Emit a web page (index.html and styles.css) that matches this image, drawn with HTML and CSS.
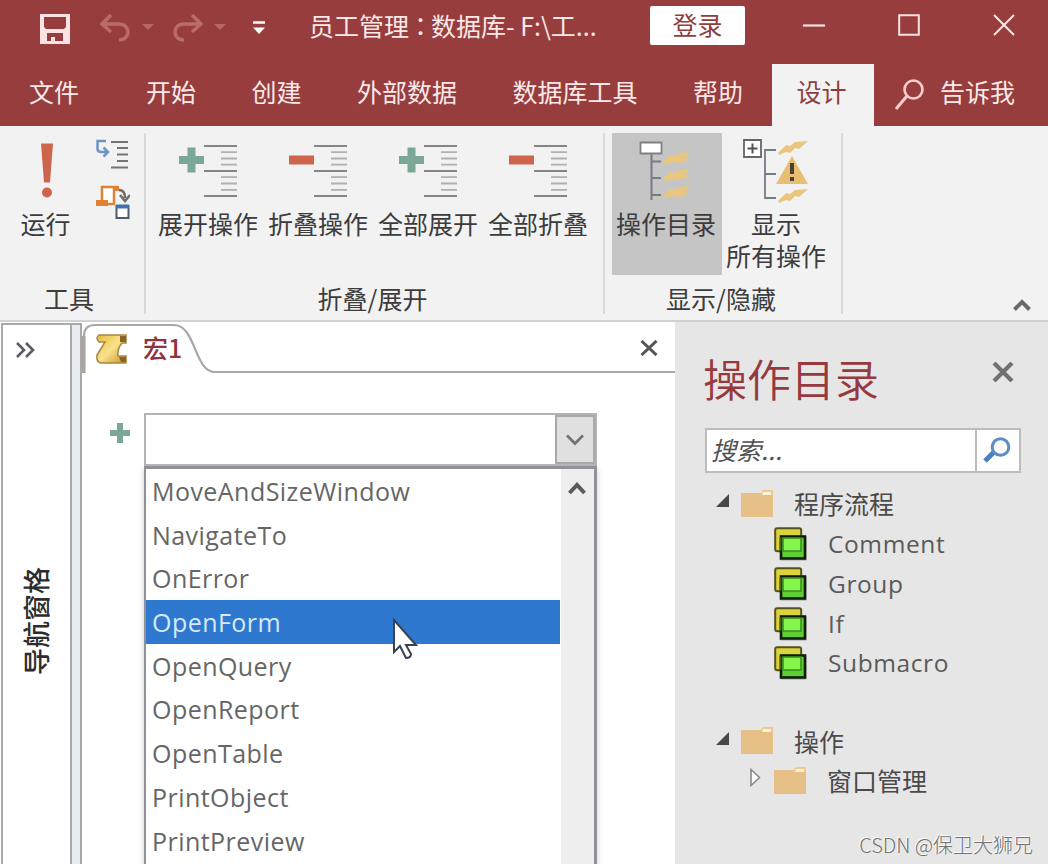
FILE: index.html
```html
<!DOCTYPE html>
<html lang="zh-CN">
<head>
<meta charset="utf-8">
<title>员工管理</title>
<link rel="stylesheet" href="styles.css">
</head>
<body>
<svg class="defs" width="0" height="0">
  <defs>
    <g id="outline-lines">
      <path d="M25 2.500h33M25 27.500h33M25 52.500h33" stroke="#858585" stroke-width="2"/>
      <path d="M42 8.700h16M42 15h16M42 21.200h16M42 33.700h16M42 40h16M42 46.300h16" stroke="#b0b0b0" stroke-width="1.800"/>
    </g>
    <path id="bolt" d="M0 12L8 4l4 1 5-4 13-1-9 8-4-1-5 5-4-1-7 3z"/>
    <path id="bolt-solid" d="M0 12L8 4l5 1 4-3 11-1-5 6 5 1-11 4-5-1-8 2z"/>
    <g id="folder">
      <path d="M18 6l4-5h10v8H18z" fill="#f0c987"/>
      <path d="M22 3h8v3h-9z" fill="#fff3df"/>
      <path d="M0 4h19l3 2h10v22H0z" fill="#e6c086"/>
    </g>
    <g id="block">
      <rect x="6" y="9" width="27" height="25" rx="2" fill="#999" opacity=".45"/>
      <rect x="1.200" y="1.200" width="26" height="23" rx="2" fill="#dcd43c" stroke="#55511c" stroke-width="2"/>
      <rect x="7" y="9.500" width="24" height="22" fill="#5fce35" stroke="#101e08" stroke-width="2.600"/>
      <rect x="9" y="11" width="18" height="13" fill="#84f64b" stroke="#398a20" stroke-width="1.500"/>
      <path d="M6.500 10.500v13" stroke="#545b12" stroke-width="2"/>
    </g>
  </defs>
</svg>
<div class="app">
  <header class="titlebar">
    <svg class="save" width="30" height="31" viewBox="0 0 30 31"><path d="M0 0h30v30H0zM4 3v10l2 2h18l2-2V3zM7 19v8h4v-4h4v4h8v-8z" fill="#fbe3e3" fill-rule="evenodd"/></svg>
    <svg class="undo" width="31" height="28" viewBox="0 0 31 28"><path d="M11 1L2 10l9 8M2 10h17c12 0 12 16 0 16" fill="none" stroke="#b96c6c" stroke-width="3.500"/></svg>
    <svg class="caret" width="12" height="6" viewBox="0 0 12 6"><path d="M0 0h12L6 6z" fill="#b66767"/></svg>
    <svg class="redo" width="31" height="28" viewBox="0 0 31 28"><path d="M20 1l9 9-9 8M29 10H12c-12 0-12 16 0 16" fill="none" stroke="#b96c6c" stroke-width="3.500"/></svg>
    <svg class="caret" width="12" height="6" viewBox="0 0 12 6"><path d="M0 0h12L6 6z" fill="#b66767"/></svg>
    <svg class="customize" width="12" height="14" viewBox="0 0 12 14"><path d="M0 1.500h12" stroke="#fff" stroke-width="2.500"/><path d="M0 6.500h12L6 13z" fill="#fff"/></svg>
    <span class="caption">员工管理<span class="colon">：</span>数据库- F:\工...</span>
    <span class="login">登录</span>
    <svg class="minimize" width="22" height="22" viewBox="0 0 22 22"><path d="M0 10.500h22" stroke="#fbe3e3" stroke-width="2.200"/></svg>
    <svg class="maximize" width="22" height="22" viewBox="0 0 22 22"><path d="M1.200 1.200h19.600v19.600H1.200z" fill="none" stroke="#fbe3e3" stroke-width="2"/></svg>
    <svg class="close" width="22" height="22" viewBox="0 0 22 22"><path d="M1 1l20 20M21 1L1 21" stroke="#fbe3e3" stroke-width="2"/></svg>
  </header>

  <nav class="tabs">
    <span class="tab">文件</span>
    <span class="tab">开始</span>
    <span class="tab">创建</span>
    <span class="tab">外部数据</span>
    <span class="tab">数据库工具</span>
    <span class="tab">帮助</span>
    <span class="tab active">设计</span>
    <span class="tell-me"><svg width="29" height="31" viewBox="0 0 29 31"><circle cx="18.500" cy="10.500" r="9" fill="none" stroke="#fbcccc" stroke-width="2.600"/><path d="M12 17L1 30" stroke="#fbcccc" stroke-width="3"/></svg>告诉我</span>
  </nav>

  <section class="ribbon">
    <div class="group tools">
      <div class="commands">
        <div class="command run">
          <svg width="12" height="55" viewBox="0 0 12 55"><path d="M0 0h12l-3 39H3z" fill="#cd654c"/><circle cx="6" cy="49" r="5" fill="#cd654c"/></svg>
          <span>运行</span>
        </div>
        <div class="small-commands">
          <svg width="34" height="32" viewBox="0 0 34 32"><path d="M10 2H1.500v8q0 3 4 3H10M7.500 8.500l4.500 4.500-4.500 4.500" fill="none" stroke="#6f95c6" stroke-width="2.500"/><path d="M15 3h17M21 9h11M21 15.500h11M21 22h11M15 28.500h17" stroke="#757575" stroke-width="2"/></svg>
          <svg width="34" height="36" viewBox="0 0 34 36"><path d="M6 16V2h16M18 3v16H3" fill="#fff" stroke="#e08234" stroke-width="2.500"/><path d="M17 1h6v5h-6zM0 15h12v6H0z" fill="#e08234"/><path d="M23 5q6 0 6 8M24 10l5 6 5-6" fill="none" stroke="#6e6e6e" stroke-width="2.500"/><path d="M20.500 21h12v12h-12z" fill="#fff" stroke="#555b68" stroke-width="2"/><path d="M20 21.500h13" stroke="#3f73af" stroke-width="4"/></svg>
        </div>
      </div>
      <div class="group-name">工具</div>
    </div>

    <div class="group folding">
      <div class="commands">
        <div class="command"><svg width="60" height="55" viewBox="0 0 60 55"><path d="M8.500 4h8v8.500H25v8h-8.500V29h-8v-8.500H0v-8h8.500z" fill="#7ba796"/><use href="#outline-lines"/></svg><span>展开操作</span></div>
        <div class="command"><svg width="60" height="55" viewBox="0 0 60 55"><path d="M0 12h25v9H0z" fill="#cd654c"/><use href="#outline-lines"/></svg><span>折叠操作</span></div>
        <div class="command"><svg width="60" height="55" viewBox="0 0 60 55"><path d="M8.500 4h8v8.500H25v8h-8.500V29h-8v-8.500H0v-8h8.500z" fill="#7ba796"/><use href="#outline-lines"/></svg><span>全部展开</span></div>
        <div class="command"><svg width="60" height="55" viewBox="0 0 60 55"><path d="M0 12h25v9H0z" fill="#cd654c"/><use href="#outline-lines"/></svg><span>全部折叠</span></div>
      </div>
      <div class="group-name">折叠/展开</div>
    </div>

    <div class="group visibility">
      <div class="commands">
        <div class="command selected"><svg width="54" height="60" viewBox="0 0 54 60"><path d="M11.500 10v49M11 20.500h10M11 37h10M11 54h10" stroke="#777b86" stroke-width="2" fill="none"/><path d="M.5 1.500h21v11H.5z" fill="#fff" stroke="#808080" stroke-width="1.800"/><g fill="#e8c67d"><use href="#bolt-solid" x="22" y="10"/><use href="#bolt-solid" x="22" y="27"/><use href="#bolt-solid" x="22" y="44"/></g></svg><span>操作目录</span></div>
        <div class="command all"><svg width="66" height="64" viewBox="0 0 66 64"><path d="M32 11H21v48h11M21 35h11" fill="none" stroke="#777b86" stroke-width="1.800"/><path d="M0 1h17v17H0z" fill="#fff" stroke="#666" stroke-width="1.800"/><path d="M3.500 9.500h10M8.500 4.500v10" stroke="#555" stroke-width="2"/><g fill="#e8c67d"><use href="#bolt" x="34" y="2"/><use href="#bolt" x="34" y="50"/></g><path d="M48 17l16 28H32z" fill="#e8bf72"/><path d="M48 24v11M48 38v4" stroke="#4a4038" stroke-width="4"/></svg><span>显示<br>所有操作</span></div>
      </div>
      <div class="group-name">显示/隐藏</div>
    </div>
    <svg class="collapse" width="18" height="12" viewBox="0 0 18 12"><path d="M1.500 10.500L9 3l7.500 7.500" fill="none" stroke="#6a6a6a" stroke-width="4"/></svg>
  </section>

  <main class="workspace">
    <aside class="nav-pane">
      <svg width="19" height="16" viewBox="0 0 19 16"><path d="M1 1l7 7-7 7M10 1l7 7-7 7" fill="none" stroke="#5b5b66" stroke-width="2.600"/></svg>
      <span class="nav-label">导航窗格</span>
    </aside>
    <div class="splitter"></div>

    <section class="document">
      <div class="doc-tabs">
        <svg class="tab-shape" width="593" height="52" viewBox="0 0 593 52"><path d="M2 51V14Q2 3 13 3H92C114 3 112 50 133 50H593" fill="none" stroke="#aaa8a4" stroke-width="2.200"/><path d="M1.500 51V14" stroke="#aaa49b" stroke-width="4"/></svg>
        <svg class="scroll-icon" width="32" height="30" viewBox="0 0 32 30"><defs><linearGradient id="gold" x2="1" y2="1"><stop offset="0" stop-color="#e7b93d"/><stop offset=".5" stop-color="#f9e28c"/><stop offset="1" stop-color="#c99124"/></linearGradient></defs><path d="M3 1h27v8h-4q-5 6-4 13h8v7H5Q0 28 1 21L9 8H3Q-1 4 3 1z" fill="url(#gold)" stroke="#a88740" stroke-width="1.500"/><path d="M24 2v6h6V2zM23 23h7v5h-5z" fill="#88632a"/></svg>
        <span class="doc-name">宏1</span>
        <svg class="doc-close" width="18" height="16" viewBox="0 0 18 16"><path d="M1.500 1l15 14M16.500 1l-15 14" stroke="#555" stroke-width="3"/></svg>
      </div>
      <div class="macro">
        <svg class="add" width="20" height="20" viewBox="0 0 20 20"><path d="M7 0h6v7h7v6h-7v7H7v-7H0V7h7z" fill="#7ba796"/></svg>
        <div class="picker">
          <div class="combo"><span class="combo-button"><svg width="18" height="12" viewBox="0 0 18 12"><path d="M1 1.500l8 8 8-8" fill="none" stroke="#757575" stroke-width="2.800"/></svg></span></div>
          <div class="dropdown">
            <ul class="options">
              <li>MoveAndSizeWindow</li>
              <li>NavigateTo</li>
              <li>OnError</li>
              <li class="highlighted">OpenForm</li>
              <li>OpenQuery</li>
              <li>OpenReport</li>
              <li>OpenTable</li>
              <li>PrintObject</li>
              <li>PrintPreview</li>
            </ul>
            <div class="scrollbar"><svg width="18" height="13" viewBox="0 0 18 13"><path d="M1.500 11L9 3l7.500 8" fill="none" stroke="#5b5b5b" stroke-width="4"/></svg></div>
          </div>
        </div>
      </div>
    </section>

    <aside class="catalog">
      <div class="catalog-head">
        <span>操作目录</span>
        <svg width="22" height="20" viewBox="0 0 22 20"><path d="M2 1l18 18M20 1L2 19" stroke="#707070" stroke-width="4.200"/></svg>
      </div>
      <div class="search">
        <span class="search-text">搜索...</span>
        <span class="search-button"><svg width="28" height="27" viewBox="0 0 28 27"><path d="M11 15L2 24" stroke="#4d7fbc" stroke-width="5"/><circle cx="17.500" cy="10" r="8.300" fill="#fff" stroke="#5c8dc5" stroke-width="3"/></svg></span>
      </div>
      <div class="tree">
        <div class="row"><svg class="open" width="13" height="13" viewBox="0 0 13 13"><path d="M13 0v13H0z" fill="#484848"/></svg><svg class="icon" width="32" height="30"><use href="#folder"/></svg><span>程序流程</span></div>
        <div class="row child latin"><svg class="icon" width="34" height="35"><use href="#block"/></svg><span>Comment</span></div>
        <div class="row child latin"><svg class="icon" width="34" height="35"><use href="#block"/></svg><span>Group</span></div>
        <div class="row child latin"><svg class="icon" width="34" height="35"><use href="#block"/></svg><span>If</span></div>
        <div class="row child latin"><svg class="icon" width="34" height="35"><use href="#block"/></svg><span>Submacro</span></div>
        <div class="row"></div>
        <div class="row"><svg class="open" width="13" height="13" viewBox="0 0 13 13"><path d="M13 0v13H0z" fill="#484848"/></svg><svg class="icon" width="32" height="30"><use href="#folder"/></svg><span>操作</span></div>
        <div class="row nested"><svg class="shut" width="11" height="19" viewBox="0 0 11 19"><path d="M1 1.500L9.500 9.500 1 17.500z" fill="#fff" stroke="#8a8a8a" stroke-width="1.600"/></svg><svg class="icon" width="32" height="30"><use href="#folder"/></svg><span>窗口管理</span></div>
      </div>
    </aside>
  </main>
  <svg class="cursor" width="28" height="42" viewBox="0 0 28 42"><path d="M2 2v32l6-6 6 12q5 0 5-4l-5-9h10z" fill="#fff" stroke="#394252" stroke-width="2"/></svg>
  <span class="watermark">CSDN @保卫大狮兄</span>
</div>
</body>
</html>
```
FILE: styles.css
```css
* { box-sizing: border-box; }
body { margin: 0; }
svg { display: block; flex: none; }
.defs { position: absolute; }

.app {
  position: relative;
  display: flex;
  flex-direction: column;
  width: 1048px;
  height: 864px;
  overflow: hidden;
  background: #fff;
  color: #3c3c3c;
  font: 25px/32px "Noto Sans CJK SC", sans-serif;
  white-space: nowrap;
}

/* Title bar */
.titlebar {
  display: flex;
  align-items: center;
  height: 64px;
  padding: 0 33px 13px 40px;
  background: #973d3d;
  color: #fbe9e9;
}
.save { margin-top: 7px; }
.undo { margin-left: 30px; margin-top: 5px; }
.caret { margin-top: 3px; }
.undo + .caret { margin-left: 11px; }
.redo { margin-left: 18px; margin-top: 5px; }
.redo + .caret { margin-left: 11px; }
.customize { margin-left: 27px; margin-top: 5px; }
.caption { width: 342px; margin: -2px 0 0 44px; }
.colon { display: inline-block; width: 22px; font-family: "Noto Sans CJK TC", sans-serif; text-indent: -1px; }
.login {
  width: 95px;
  height: 39px;
  border-radius: 2px;
  background: #fff;
  color: #8d3f3f;
  line-height: 36px;
  text-align: center;
}
.minimize { margin-left: 58px; }
.maximize { margin-left: 73px; margin-top: -1px; }
.close { margin-left: 73px; margin-top: -1px; }

/* Ribbon tabs */
.tabs {
  display: flex;
  height: 62px;
  padding-left: 29px;
  background: #973d3d;
  color: #fbe9e9;
  line-height: 54px;
}
.tab { margin-right: 55.500px; }
.tab:first-child { margin-right: 67px; }
.tab:nth-child(6) { margin-right: 29px; }
.tab.active {
  width: 102px;
  margin-right: 21px;
  padding-right: 3px;
  background: #f2f2f2;
  color: #8d3f3f;
  text-align: center;
}
.tell-me { display: flex; gap: 16px; }
.tell-me svg { margin-top: 15px; }

/* Ribbon */
.ribbon {
  display: flex;
  height: 196px;
  background: #f2f2f2;
  border-bottom: 2px solid #d2d2d2;
}
.group {
  display: flex;
  flex-direction: column;
  height: 181px;
  margin-top: 7px;
  border-right: 2px solid #d9d9d9;
}
.tools { width: 146px; }
.folding { width: 459px; }
.visibility { width: 238px; }
.commands { display: flex; height: 143px; }
.group-name { padding-top: 7px; padding-right: 4px; text-align: center; }
.tools .group-name { padding-right: 6px; }
.command {
  display: flex;
  flex-direction: column;
  align-items: center;
  width: 110px;
}
.command svg { height: 66px; margin-top: 5px; padding: 5px 0; overflow: visible; }
.command span { margin-top: 3px; padding-right: 2px; text-align: center; }
.run { width: 93px; }
.small-commands { padding: 6px 0 0 3px; }
.small-commands svg + svg { margin-top: 14px; }
.folding .commands { padding-left: 8px; }
.visibility .commands { padding-left: 7px; }
.selected { background: #c5c5c5; }
.command.selected svg, .command.all svg { padding: 0; }
.collapse { margin: 173px 0 0 170px; }

/* Workspace */
.workspace { display: flex; flex: 1; min-height: 0; }
.nav-pane {
  display: flex;
  flex-direction: column;
  width: 71px;
  margin: 1px 0 0 1px;
  padding: 17px 0 0 13px;
  border: 2px solid #a9a9ad;
  border-bottom: 0;
}
.nav-label {
  width: 32px;
  height: 108px;
  margin: 209px 0 0 4px;
  font-weight: 500;
  font-size: 27px;
  line-height: 32px;
  color: #2d2d2d;
  writing-mode: vertical-rl;
  transform: rotate(180deg);
  text-orientation: sideways;
}
.splitter {
  width: 10px;
  margin-top: 1px;
  background: #e9edf1;
  border-top: 2px solid #a9a9ad;
  border-right: 2px solid #a9a9ad;
}

.document { display: flex; flex-direction: column; width: 593px; }
.doc-tabs { position: relative; display: flex; flex: none; height: 52px; padding-left: 14px; }
.tab-shape { position: absolute; left: 0; top: 0; }
.scroll-icon { margin-top: 12px; }
.doc-name { flex: 1; margin: 9px 0 0 15px; color: #8f3242; font-weight: 500; }
.doc-close { margin: 18px 17px 0 0; }
.macro { display: flex; flex: none; padding: 39px 0 0 28px; }
.add { margin-top: 10px; }
.picker { width: 453px; margin-left: 14px; }
.combo {
  display: flex;
  justify-content: flex-end;
  height: 53px;
  border: 2px solid #b3b3b3;
}
.combo-button {
  display: flex;
  align-items: center;
  justify-content: center;
  width: 40px;
  background: #e0e0e0;
  border: 2px solid #a9a9a9;
}
.dropdown {
  display: flex;
  height: 404px;
  border: 3px solid #919199;
  border-width: 3px 3px 0 2px;
  box-shadow: 0 3px 6px #ccc;
}
.options {
  flex: 1;
  margin: 0 1px 0 0;
  padding: 0;
  list-style: none;
  font: 25px/44px "Open Sans", "Noto Sans", sans-serif;
  letter-spacing: .45px;
  color: #666;
}
.options li { height: 43.700px; padding-left: 6px; }
.highlighted { background: #2f78d0; color: #d7e8fb; }
.scrollbar { width: 33px; padding: 13px 0 0 7px; background: #eee; }

/* Action catalog */
.catalog { flex: 1; background: #e6e6e6; padding: 28px 27px 0 28px; }
.catalog-head {
  display: flex;
  justify-content: space-between;
  height: 78px;
  color: #963a40;
  font-size: 44px;
  font-weight: 350;
  line-height: 56px;
}
.catalog-head svg { margin: 12px 7px 0 0; }
.search {
  display: flex;
  width: 316px;
  height: 45px;
  margin-left: 2px;
  background: #fff;
  border: 2px solid #bcbcbc;
}
.search-text { flex: 1; padding-left: 4px; color: #505050; font-style: italic; line-height: 38px; }
.search-button { width: 44px; padding: 7px 0 0 6px; border-left: 2px solid #bcbcbc; }
.tree { padding: 12px 0 0 13px; }
.row { display: flex; align-items: center; height: 39.600px; color: #4a4a4a; }
.row span { margin-top: -3px; }
.row .icon { margin-top: -2px; }
.open { margin-bottom: 8px; }
.open + .icon { margin-left: 12px; }
.row .icon + span { margin-left: 21px; }
.child { padding-left: 58px; }
.row.child .icon { margin-top: 1px; }
.row.child .icon + span { margin-left: 20px; }
.nested { padding-left: 34px; }
.shut { margin-bottom: 8px; }
.shut + .icon { margin-left: 13px; }
.latin { font: 24.500px/32px "Open Sans", "Noto Sans", sans-serif; letter-spacing: .6px; color: #5a5a5a; }
.row.latin span { margin-top: 0; }

/* Overlays */
.cursor { position: absolute; left: 392px; top: 618px; }
.watermark {
  position: absolute;
  right: 15px;
  bottom: 3px;
  color: #707070;
  font-size: 20px;
  font-weight: 300;
  text-shadow: -1px -1px 0 #fff;
}
```
